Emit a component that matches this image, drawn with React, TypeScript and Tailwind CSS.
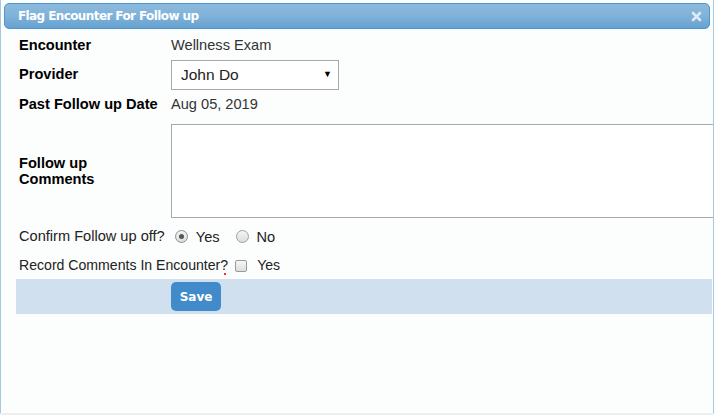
export default function App() {
  return (
    <div className="h-[415px] w-[716px] overflow-hidden bg-white" style={{ fontFamily: '"Liberation Sans", Arial, sans-serif' }}>
      <div className="relative h-[413px] w-[714px] overflow-hidden border-x border-[#a6c9e2] bg-[#fcfdfd]">
        {/* Title bar */}
        <div className="mx-[3px] mt-[3px] flex h-[26px] items-center justify-between rounded-[5px] border border-[#4f96d1] bg-gradient-to-b from-[#8bbadd] via-[#80b2d9] to-[#65a1d0] pl-[13px] pr-[7px]">
          <span className="text-[12px] font-bold text-white" style={{ fontFamily: '"DejaVu Sans", Verdana, sans-serif', letterSpacing: '-0.6px' }}>
            Flag Encounter For Follow up
          </span>
          <svg width="11" height="11" viewBox="0 0 11 11">
            <path d="M2 2 L9 9 M9 2 L2 9" stroke="#dfeaf5" strokeWidth="2.6" strokeLinecap="round" />
          </svg>
        </div>

        <div className="pl-[18px] pt-[7px] text-[14.6px] text-[#222]">
          <div className="flex h-[19px] items-center">
            <div className="w-[152px] shrink-0 font-bold text-black">Encounter</div>
            <div className="text-[#333]">Wellness Exam</div>
          </div>
          <div className="mt-[5px] flex h-[30px] items-center">
            <div className="w-[152px] shrink-0 font-bold text-black">Provider</div>
            <div className="flex h-[30px] w-[168px] items-center justify-between border border-[#a9a9a9] bg-white pl-[9px] pr-[6px]">
              <span className="text-[15.5px] text-[#222]">John Do</span>
              <span className="text-[9px] text-black">▼</span>
            </div>
          </div>
          <div className="mt-[5px] flex h-[19px] items-center">
            <div className="w-[152px] shrink-0 font-bold text-black">Past Follow up Date</div>
            <div className="text-[#333]">Aug 05, 2019</div>
          </div>
          <div className="mt-[10px] flex h-[94px] items-center">
            <div className="w-[152px] shrink-0 font-bold leading-[16px] text-black">
              Follow up
              <br />
              Comments
            </div>
            <div className="h-[94px] w-[580px] shrink-0 border border-[#a9a9a9] bg-white" />
          </div>
          <div className="mt-[9px] flex h-[19px] items-center text-[#222]">
            <span>Confirm Follow up off?</span>
            <span className="ml-[10px] flex h-[13px] w-[13px] items-center justify-center rounded-full border border-[#8f8f8f] bg-gradient-to-b from-[#f4f4f4] to-[#dcdcdc]">
              <span className="h-[5px] w-[5px] rounded-full bg-[#555]" />
            </span>
            <span className="ml-[8px] mt-[3px]">Yes</span>
            <span className="ml-[16px] h-[13px] w-[13px] rounded-full border border-[#a0a0a0] bg-gradient-to-b from-[#f4f4f4] to-[#dcdcdc]" />
            <span className="ml-[8px] mt-[3px]">No</span>
          </div>
          <div className="mt-[10px] flex h-[19px] items-center text-[14.1px] text-[#222]">
            <span className="relative">
              Record Comments In Encounter?
              <span className="absolute bottom-[1px] right-[2px] h-[2px] w-[2px] bg-[#e33]" />
            </span>
            <span className="ml-[7px] h-[12px] w-[12px] rounded-[2px] border border-[#9a9a9a] bg-gradient-to-b from-[#f6f6f6] to-[#dedede]" />
            <span className="ml-[10px] mt-[1px]">Yes</span>
          </div>
        </div>

        <div className="ml-[15px] mt-[4px] flex h-[35px] w-[696px] items-center bg-[#d0e0ee] pl-[155px]">
          <button className="h-[29px] w-[50px] rounded-[5px] bg-[#428bca] text-[12px] font-bold text-white" style={{ fontFamily: '"DejaVu Sans", Verdana, sans-serif' }}>
            Save
          </button>
        </div>
      </div>
      <div className="h-[2px] w-[714px] bg-[#eeeeee]" />
    </div>
  );
}
